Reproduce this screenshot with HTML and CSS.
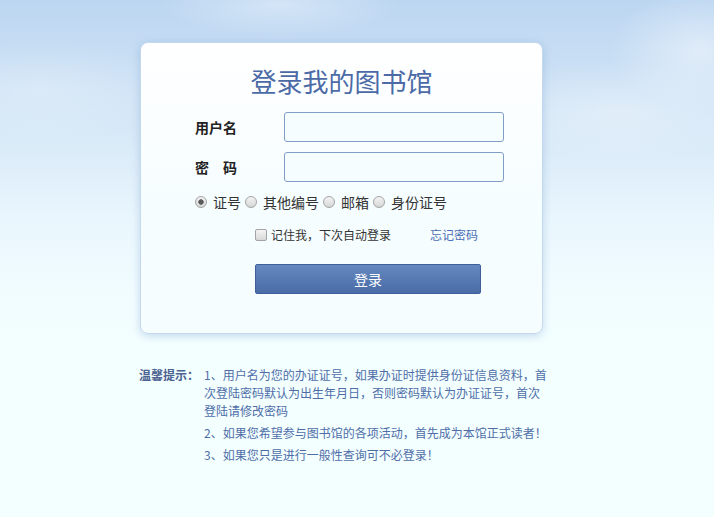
FILE: index.html
```html
<!DOCTYPE html>
<html lang="zh-CN">
<head>
    <meta charset="UTF-8">
    <title>登录我的图书馆</title>
    <link rel="stylesheet" href="styles.css">
</head>
<body>
    <div class="page">
        <div class="login-box">
            <h1>登录我的图书馆</h1>
            <form class="login-form" onsubmit="return false;">
                <div class="form-row">
                    <label class="field-label" for="username">用户名</label>
                    <input type="text" id="username" class="text-input">
                </div>
                <div class="form-row">
                    <label class="field-label" for="password">密　码</label>
                    <input type="password" id="password" class="text-input">
                </div>
                <div class="type-row">
                    <label class="type-item"><input type="radio" name="type" checked><span>证号</span></label>
                    <label class="type-item"><input type="radio" name="type"><span>其他编号</span></label>
                    <label class="type-item"><input type="radio" name="type"><span>邮箱</span></label>
                    <label class="type-item"><input type="radio" name="type"><span>身份证号</span></label>
                </div>
                <div class="remember-row">
                    <label class="remember"><input type="checkbox"><span>记住我，下次自动登录</span></label>
                    <a href="#" class="forgot">忘记密码</a>
                </div>
                <button type="submit" class="btn-login">登录</button>
            </form>
        </div>

        <div class="tips">
            <div class="tips-title">温馨提示：</div>
            <ul class="tips-list">
                <li>1、用户名为您的办证证号，如果办证时提供身份证信息资料，首次登陆密码默认为出生年月日，否则密码默认为办证证号，首次登陆请修改密码</li>
                <li>2、如果您希望参与图书馆的各项活动，首先成为本馆正式读者！</li>
                <li>3、如果您只是进行一般性查询可不必登录！</li>
            </ul>
        </div>
    </div>
</body>
</html>
```

FILE: styles.css
```css
html, body {
    margin: 0;
    padding: 0;
    height: 100%;
}
body {
    font-family: "Noto Sans CJK SC", "Liberation Sans", sans-serif;
    font-size: 14px;
    color: #222;
    background-color: #f3feff;
    background-image:
        radial-gradient(ellipse 90px 60px at 700px 50px, rgba(255,255,255,0.45), rgba(255,255,255,0) 100%),
        radial-gradient(ellipse 120px 30px at 280px 5px, rgba(255,255,255,0.35), rgba(255,255,255,0) 100%),
        radial-gradient(ellipse 160px 50px at 620px 110px, rgba(255,255,255,0.3), rgba(255,255,255,0) 100%),
        radial-gradient(ellipse 140px 50px at 40px 90px, rgba(255,255,255,0.25), rgba(255,255,255,0) 100%),
        linear-gradient(to bottom, #bcd6f1 0, #c8def4 60px, #d9eaf8 140px, #e9f6fd 220px, #f1fcff 290px, #f3feff 340px);
    background-repeat: no-repeat;
}
.page {
    padding: 42px 0 0 139px;
}
.login-box {
    width: 401px;
    margin-left: 1px;
    padding: 23px 0 39px;
    border: 1px solid #c4d8ee;
    border-radius: 8px;
    background: linear-gradient(to bottom, #ffffff, #f5fdff 60%);
    box-shadow: 0 2px 8px rgba(110, 150, 200, 0.35);
}
.login-box h1 {
    margin: 0 0 16px;
    font-size: 26px;
    line-height: 30px;
    font-weight: normal;
    color: #4b6aa6;
    text-align: center;
}
.login-form {
    padding-left: 54px;
}
.form-row {
    display: flex;
    align-items: center;
    margin-bottom: 10px;
}
.field-label {
    width: 89px;
    font-weight: bold;
    font-size: 14px;
    line-height: 18px;
    color: #222;
}
.text-input {
    box-sizing: border-box;
    width: 220px;
    height: 30px;
    margin: 0;
    padding: 0 6px;
    border: 1px solid #819dc8;
    border-radius: 3px;
    background: #f6fdff;
    font-size: 14px;
    outline: none;
}
.type-row {
    display: flex;
    align-items: center;
    margin-top: 11px;
    line-height: 18px;
    color: #333;
}
.type-item {
    display: flex;
    align-items: center;
    margin-right: 4px;
}
.type-item input {
    appearance: none;
    box-sizing: border-box;
    width: 12px;
    height: 12px;
    margin: 0 6px 0 0;
    border: 1px solid #a3a3a3;
    border-radius: 50%;
    background: linear-gradient(to bottom, #f4f4f4, #d6d6d6);
}
.type-item input:checked {
    background: radial-gradient(circle, #5a5a5a 0, #5a5a5a 2.4px, transparent 3px),
        linear-gradient(to bottom, #f4f4f4, #d6d6d6);
}
.remember-row {
    display: flex;
    align-items: center;
    justify-content: space-between;
    width: 223px;
    margin: 15px 0 0 60px;
    font-size: 12px;
    line-height: 18px;
}
.remember {
    display: flex;
    align-items: center;
    color: #333;
}
.remember input {
    appearance: none;
    box-sizing: border-box;
    width: 12px;
    height: 12px;
    margin: 0 4px 0 0;
    border: 1px solid #a3a3a3;
    border-radius: 2px;
    background: linear-gradient(to bottom, #f4f4f4, #d8d8d8);
}
.forgot {
    color: #4d6fb3;
    text-decoration: none;
}
.btn-login {
    display: block;
    box-sizing: border-box;
    width: 226px;
    height: 30px;
    margin: 20px 0 0 60px;
    border: 1px solid #3f6098;
    border-radius: 2px;
    background: linear-gradient(to bottom, #6588bf, #4a6ca7);
    color: #fff;
    font-family: inherit;
    font-size: 14px;
    cursor: pointer;
}
.tips {
    display: flex;
    margin-top: 32px;
    font-size: 12px;
    line-height: 18px;
    color: #4f6ea8;
}
.tips-title {
    width: 65px;
    flex-shrink: 0;
    font-weight: bold;
    color: #4a6290;
}
.tips-list {
    width: 346px;
    margin: 0;
    padding: 0;
    list-style: none;
}
.tips-list li {
    margin-bottom: 4px;
}
```
